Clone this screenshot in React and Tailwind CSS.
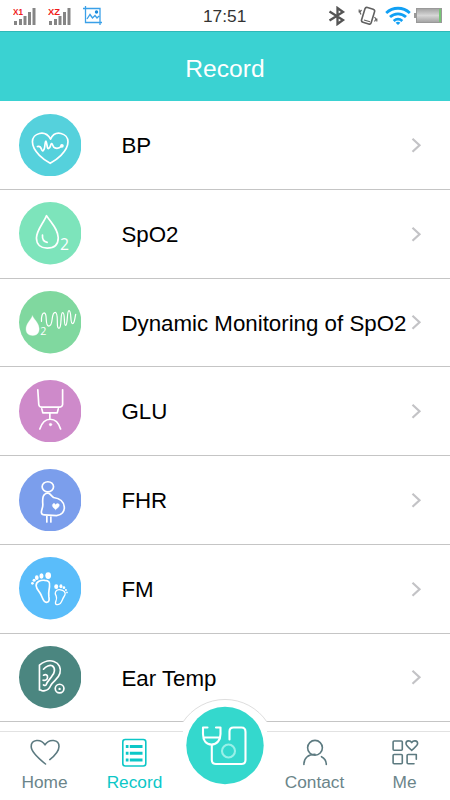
import React from "react";

const rows = [
  {
    label: "BP", color: "#55d1dc", top: 27,
    icon: (
      <>
        <path d="M120 174C105 166 67 140 67 110C67 84 105 72 121 102C135 72 173 84 173 110C173 140 135 166 120 174Z" />
        <path d="M82 124Q91 122 94 132Q97 140 100 135C106 130 103 110 107 108C111 112 110 132 115 130C123 127 120 116 124 115C129 117 127 126 134 128Q144 132 154 123" />
        <circle cx="155" cy="122" r="3" fill="white" />
      </>
    ),
  },
  {
    label: "SpO2", color: "#7de4bb", top: 25.5,
    icon: (
      <>
        <path d="M109 66C101 87 79 109 79 133C79 153 93 163 111 163C131 163 144 153 144 132C143 106 125 91 109 66Z" />
        <path d="M97 124C96 136 101 144 111 146" />
        <text x="149" y="168" fontSize="47" fill="white" stroke="none" fontFamily="Open Sans, sans-serif">2</text>
      </>
    ),
  },
  {
    label: "Dynamic Monitoring of SpO2", color: "#80d89f", top: 25.5,
    icon: (
      <>
        <path d="M67 100C61 114 48 123 48 139C48 152 56 158 68 158C80 158 87 151 87 138C86 121 75 114 67 100Z" fill="white" strokeWidth="1" />
        <text x="90" y="158" fontSize="32" fill="white" stroke="none" fontFamily="Open Sans, sans-serif">2</text>
        <path strokeWidth="3.6" d="M94 116C93 101 97 91 102 91C114 92 102 130 116 130C131 130 121 89 135 89C147 90 136 137 146 137C156 136 149 90 157 90C166 90 159 128 166 128C173 127 169 84 176 84C185 85 178 123 187 123C193 122 193 108 196 95" />
      </>
    ),
  },
  {
    label: "GLU", color: "#ce8aca", top: 25,
    icon: (
      <>
        <path d="M83 54L86 98Q87 106 95 106H147Q156 106 157 98L157 54" />
        <path d="M95 111L98 123H141L144 111M119 123V141M89 171C96 150 107 142 120 142C134 142 145 151 151 171" />
        <circle cx="121" cy="158" r="4" fill="white" strokeWidth="1" />
      </>
    ),
  },
  {
    label: "FHR", color: "#7b9eec", top: 27,
    icon: (
      <>
        <ellipse cx="113" cy="80" rx="17" ry="15" />
        <path d="M103 103C96 109 97 121 98 132C99 143 92 152 94 158Q95 164 103 164L139 166C155 165 163 153 162 140C160 119 144 114 130 112C124 108 122 103 117 100Q109 97 103 103ZM110 165V185M122 165V185" />
        <path d="M136 148C127 141 124 135 128 131C132 127 135 131 136 134C139 129 144 128 147 133C149 138 142 144 136 148Z" fill="white" strokeWidth="1" />
      </>
    ),
  },
  {
    label: "FM", color: "#5abdfa", top: 25.5,
    icon: (
      <>
        <path d="M78 111C78 98 91 94 104 95C115 95 120 101 118 113C117 126 114 129 116 143C118 154 117 160 109 161C98 160 98 147 91 135C86 127 79 121 78 111Z" />
        <path strokeWidth="4" d="M136 129C139 122 149 122 157 125C167 129 166 137 161 144C156 151 156 158 150 164C143 169 134 169 136 160C139 152 141 148 138 142C135 137 134 133 136 129Z" />
        <g fill="white" stroke="none">
          <ellipse cx="114" cy="81" rx="8.5" ry="10" />
          <ellipse cx="94" cy="82" rx="6" ry="8" />
          <ellipse cx="80" cy="87" rx="5.5" ry="7" />
          <circle cx="72" cy="95" r="4.5" />
          <circle cx="67" cy="104" r="4" />
          <ellipse cx="138" cy="114" rx="6" ry="7" />
          <ellipse cx="152" cy="113" rx="4.5" ry="6" />
          <circle cx="161" cy="117" r="4" />
          <circle cx="167" cy="124" r="3" />
          <circle cx="170" cy="131" r="2.5" />
        </g>
      </>
    ),
  },
  {
    label: "Ear Temp", color: "#4b8680", top: 25,
    icon: (
      <>
        <path d="M88 156V82C99 73 116 66 131 71C147 76 153 91 149 106C144 124 130 128 122 142C118 151 113 157 104 158Q97 160 94 158Q92 155 88 156" />
        <path d="M100 94C107 85 119 81 126 84C137 91 133 107 125 115C119 124 112 130 108 140Q106 144 100 141M100 112C108 108 113 112 112 119C112 125 105 129 99 127" />
        <circle cx="148" cy="152" r="13" />
        <circle cx="148" cy="153" r="3.5" fill="white" stroke="none" />
      </>
    ),
  },
];

function Row({ label, color, top, icon }) {
  return (
    <div className="flex h-[88.75px] shrink-0 items-center border-b border-[#c5c5c5] pl-[19px] pr-[27px]">
      <svg width="62.4" height="62.4" viewBox={`27 ${top} 186 186`} className="shrink-0" fill="none" stroke="white" strokeWidth="5" strokeLinecap="round" strokeLinejoin="round">
        <circle cx="120" cy={top + 93} r="93" fill={color} stroke="none" />
        {icon}
      </svg>
      <span className="ml-10 flex-1 whitespace-nowrap pt-0.5 text-[22.3px] text-black">{label}</span>
      <svg width="12" height="16" viewBox="0 0 12 16" fill="none" stroke="#c3c3c6" strokeWidth="2.2" className="shrink-0">
        <path d="M1.5 1.8L8.5 8.3L1.5 14.8" />
      </svg>
    </div>
  );
}

function Signal({ mark }) {
  return (
    <svg width="24" height="20" viewBox="0 0 24 20">
      <g fill="#858585">
        <path d="M1 14h3v4H1zM6 12h3v6H6zM10.5 9h3v9h-3zM15 5h3v13h-3zM19.5 1h3v17h-3z" />
      </g>
      <text x="0" y="7.6" fontSize="8.5" fontWeight="bold" fill="#f01b1b" fontFamily="Liberation Sans, sans-serif" textLength={mark === "x1" ? 10 : 12} lengthAdjust="spacingAndGlyphs">{mark === "x1" ? "X1" : "XZ"}</text>
    </svg>
  );
}

function StatusBar() {
  return (
    <div className="flex h-[31px] shrink-0 items-center bg-white">
      <div className="flex w-[203px] items-center pl-[13px] pt-0.5">
        <Signal mark="x1" />
        <span className="w-[11px]" />
        <Signal mark="xz" />
        <svg width="20" height="20" viewBox="0 0 20 20" className="ml-[10.5px] mb-0.5" fill="none" stroke="#3aa0e8" strokeWidth="1.3">
          <path d="M2.5 0V16.5H19M0 2.5H17V19M4 13L7 8.5L9.5 12L12 9.5L14 12L16 10" />
          <circle cx="13.5" cy="6" r="1.7" fill="#1789dc" stroke="none" />
        </svg>
      </div>
      <span className="w-[125px] pt-0.5 text-[17.3px] text-[#333]">17:51</span>
      <svg width="18" height="20" viewBox="0 0 18 20" fill="none" stroke="#555" strokeWidth="2.3">
        <path d="M1.5 5.5L15 14L9.5 18V2L15 6L1.5 14.5" />
      </svg>
      <svg width="20" height="20" viewBox="0 0 20 20" className="ml-[12px]" fill="none" stroke="#606060" strokeWidth="1.6">
        <rect x="5" y="2" width="10" height="15.5" rx="2" transform="rotate(17 10 10)" />
        <path strokeWidth="1.2" d="M6 14L12 15.8M3.5 4L1.8 6L3 8.5M1.2 3.5V6.5M16.5 11L18 13L16.5 15.5M18.8 12.5V15.5" />
      </svg>
      <svg width="26" height="20" viewBox="0 0 26 20" className="ml-[7px]" fill="none" stroke="#11a0f4" strokeWidth="2.8">
        <path d="M1.2 7C8 .7 18 .7 24.8 7M5 11C9.5 6.8 16.5 6.8 21 11M8.7 15C11.5 12.6 14.5 12.6 17.3 15" />
        <path d="M10.6 16.7Q13 14.9 15.4 16.7L13 19Z" fill="#11a0f4" stroke="none" />
      </svg>
      <div className="ml-[3px] h-[5px] w-[2px] bg-[#999]" />
      <div className="flex h-[15px] w-[26px] justify-end border border-[#999] bg-linear-to-b from-[#a5a5a5] via-[#d6d6d6] to-[#a5a5a5]">
        <div className="w-[2px] bg-[#76c576]" />
      </div>
    </div>
  );
}

function Tab({ label, active, children }) {
  return (
    <div className={`flex w-[90px] flex-col items-center pt-[6px] ${active ? "text-[#0cc7c7]" : "text-[#6b858a]"}`}>
      <svg width="32" height="32" viewBox="0 0 32 32" fill="none" stroke={active ? "#0cc7c7" : "#5c7a80"} strokeWidth="1.6" strokeLinecap="round" strokeLinejoin="round">
        {children}
      </svg>
      <span className="mt-[3px] text-[17.3px] leading-[19px]">{label}</span>
    </div>
  );
}

export default function App() {
  return (
    <div className="relative flex h-[800px] w-[450px] flex-col overflow-hidden bg-white font-['Liberation_Sans',Arial,sans-serif]">
      <StatusBar />
      <header className="flex h-[70px] shrink-0 items-center justify-center border-t border-[#2eb8b8] bg-[#3ad2d2] pt-1.5 text-[24.6px] text-white">
        Record
      </header>
      <main className="flex min-h-0 flex-1 flex-col overflow-hidden">
        {rows.map((row) => <Row key={row.label} {...row} />)}
      </main>
      <nav className="-ml-[0.5px] flex h-[69px] shrink-0 border-t border-[#e2e2e2] bg-white">
        <Tab label="Home">
          <path d="M16.5 26C9 20 2.2 14 2.2 8.5C2.2 1 12 .5 16 6.8C20 .5 30 1 30 8.5C30 13 26 17.5 20.8 21.6" />
        </Tab>
        <Tab label="Record" active>
          <rect x="3.8" y="1.5" width="23" height="26.5" rx="2.5" />
          <path strokeLinecap="butt" strokeWidth="3" d="M6.8 8.5h2.7M10.8 8.5H23.5M6.8 15.3h2.7M10.8 15.3H23.5M6.8 22.1h2.7M10.8 22.1H23.5" />
        </Tab>
        <div className="w-[90px]" />
        <Tab label="Contact">
          <circle cx="16" cy="9.8" r="7.4" />
          <path d="M4.9 26.5C4.9 20 9.2 16.4 16 16.4M22.5 18.7C26.2 20.5 27.3 23.5 27.3 26.5" />
        </Tab>
        <Tab label="Me">
          <rect x="4.1" y="3" width="9.2" height="9.2" rx="1" />
          <path d="M22.7 12.3C19.5 9.6 17 7.8 17 5.6C17 2.1 21.3 2.1 22.7 4.6C24.2 2.1 28.6 2.1 28.6 5.6C28.6 7.8 25.8 9.6 22.7 12.3Z" />
          <rect x="4.1" y="16.5" width="9.2" height="9.2" rx="1" />
          <path d="M25 25.7H19.2Q18.1 25.7 18.1 24.6V17.6Q18.1 16.5 19.2 16.5H27.3V21.3" />
        </Tab>
      </nav>
      <svg className="absolute left-[178px] top-[698px]" width="94" height="102" viewBox="0 0 94 102" fill="none">
        <path d="M5 36V24A50.4 50.4 0 0 1 89 24V36L94 102H0Z" fill="white" />
        <path d="M5 24A50.4 50.4 0 0 1 89 24" stroke="#dedede" />
        <circle cx="47" cy="47.5" r="38.7" fill="#34d8cd" />
        <g stroke="white" strokeWidth="2.1" strokeLinecap="round" strokeLinejoin="round">
          <path d="M29.5 29.5H25V36C25 42 28 46.5 33.5 46.5S42.5 42 42.5 36V29.5H38M25.5 39.5H42M33.8 47V62C33.8 65 35 66 38 66H63.5Q67.5 66 67.5 62V34Q67.5 29.5 63.5 29.5H55.5Q51.5 29.5 51.5 33.5V41.5" />
          <circle cx="50.5" cy="53" r="6.5" stroke="#99f0e8" />
        </g>
      </svg>
    </div>
  );
}
